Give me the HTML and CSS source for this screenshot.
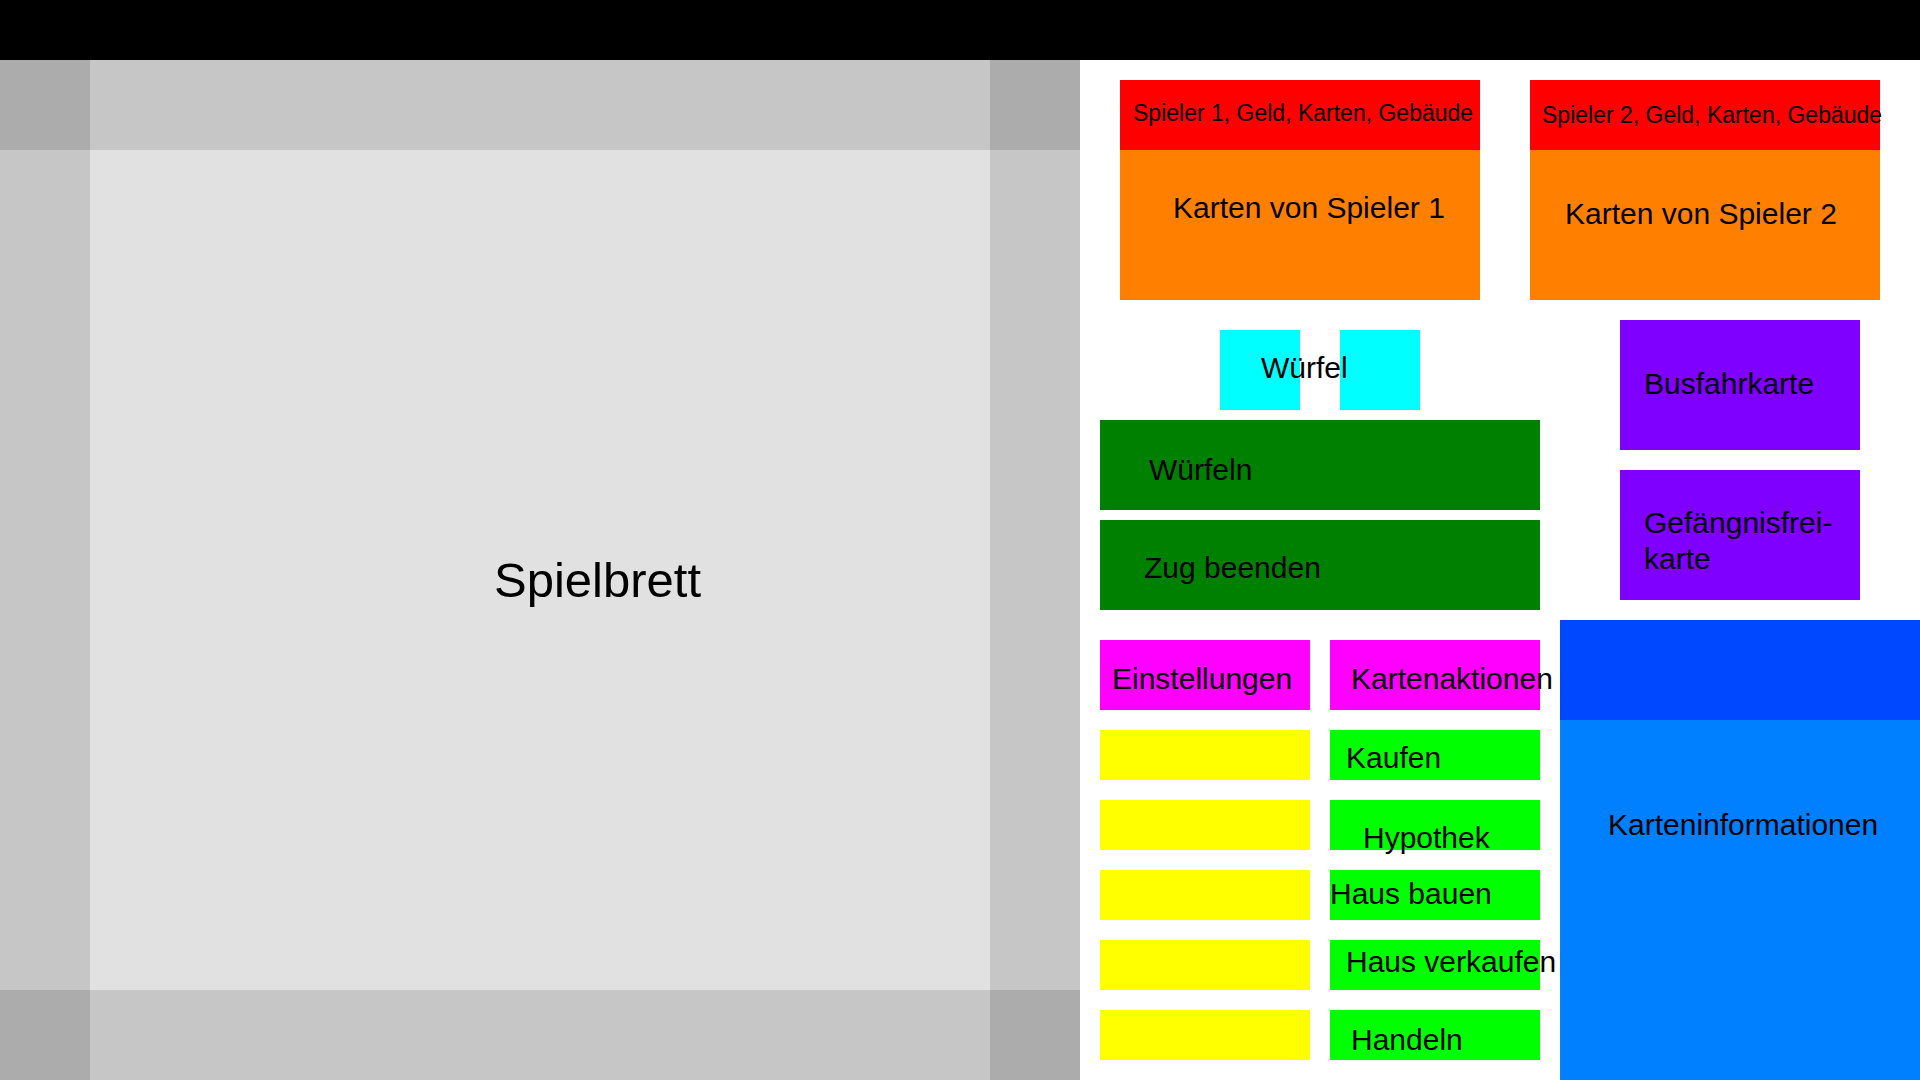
FILE: index.html
```html
<!DOCTYPE html>
<html lang="de">
<head>
<meta charset="utf-8">
<title>Spiel</title>
<link rel="stylesheet" href="styles.css">
</head>
<body>
<div class="topbar"></div>
<div class="main">
  <div class="board">
    <div class="corner"></div><div class="edge"></div><div class="corner"></div>
    <div class="edge"></div>
    <div class="center"><span class="board-title">Spielbrett</span></div>
    <div class="edge"></div>
    <div class="corner"></div><div class="edge"></div><div class="corner"></div>
  </div>
  <div class="side">
    <div class="players">
      <div class="player p1">
        <div class="p-head"><span class="small-lbl">Spieler 1, Geld, Karten, Gebäude</span></div>
        <div class="p-cards"><span class="lbl">Karten von Spieler 1</span></div>
      </div>
      <div class="player p2">
        <div class="p-head"><span class="small-lbl">Spieler 2, Geld, Karten, Gebäude</span></div>
        <div class="p-cards"><span class="lbl">Karten von Spieler 2</span></div>
      </div>
    </div>
    <div class="lower">
      <div class="left-col">
        <div class="dice">
          <div class="die"></div>
          <div class="die"></div>
          <span class="lbl dice-lbl">Würfel</span>
        </div>
        <div class="action roll"><span class="lbl">Würfeln</span></div>
        <div class="action end"><span class="lbl">Zug beenden</span></div>
        <div class="pair">
          <div class="menu settings"><span class="lbl">Einstellungen</span></div>
          <div class="menu cardactions"><span class="lbl">Kartenaktionen</span></div>
        </div>
        <div class="rows">
          <div class="slot"></div><div class="cmd buy"><span class="lbl">Kaufen</span></div>
          <div class="slot"></div><div class="cmd mortgage"><span class="lbl">Hypothek</span></div>
          <div class="slot"></div><div class="cmd build"><span class="lbl">Haus bauen</span></div>
          <div class="slot"></div><div class="cmd sell"><span class="lbl">Haus verkaufen</span></div>
          <div class="slot"></div><div class="cmd trade"><span class="lbl">Handeln</span></div>
        </div>
      </div>
      <div class="right-col">
        <div class="special bus"><span class="lbl">Busfahrkarte</span></div>
        <div class="special jail"><span class="lbl wrap">Gefängnisfrei&shy;karte</span></div>
        <div class="info-head"></div>
        <div class="info"><span class="lbl">Karteninformationen</span></div>
      </div>
    </div>
  </div>
</div>
</body>
</html>
```
FILE: styles.css
```css
* { box-sizing: border-box; }
html, body { margin: 0; padding: 0; }
body {
  width: 1920px;
  height: 1080px;
  overflow: hidden;
  background: #ffffff;
  font-family: "Liberation Sans", Arial, sans-serif;
  color: #000;
}
.topbar { height: 60px; background: #000; }
.main { display: flex; height: 1020px; }

.board {
  width: 1080px;
  height: 1020px;
  display: grid;
  grid-template-columns: 90px 900px 90px;
  grid-template-rows: 90px 840px 90px;
}
.corner { background: #acacac; }
.edge { background: #c6c6c6; }
.center { background: #e1e1e1; padding: 402px 0 0 404px; }
.board-title { display: block; font-size: 49px; line-height: 56px; white-space: nowrap; }

.lbl { display: block; font-size: 30px; line-height: 34px; white-space: nowrap; }
.small-lbl { display: block; font-size: 23px; line-height: 26px; white-space: nowrap; }

.side { width: 840px; padding-top: 20px; }
.players { display: flex; gap: 50px; padding-left: 40px; }
.player { display: flex; flex-direction: column; }
.p1 { width: 360px; }
.p2 { width: 350px; }
.p-head { height: 70px; background: #ff0000; padding: 20px 0 0 13px; }
.p2 .p-head { padding-top: 22px; padding-left: 12px; }
.p-cards { height: 150px; background: #ff8000; }
.p1 .p-cards { padding: 41px 0 0 53px; }
.p2 .p-cards { padding: 47px 0 0 35px; }

.lower { display: grid; grid-template-columns: 440px 360px; column-gap: 20px; padding-left: 20px; }
.left-col { display: flex; flex-direction: column; }
.right-col { display: flex; flex-direction: column; }

.dice { position: relative; display: flex; gap: 40px; height: 80px; margin-top: 30px; padding-left: 120px; }
.die { width: 80px; height: 80px; background: #00ffff; }
.dice-lbl { position: absolute; left: 161px; top: 21px; }

.action { height: 90px; background: #008000; }
.roll { margin-top: 10px; padding: 33px 0 0 49px; }
.end { margin-top: 10px; padding: 31px 0 0 44px; }

.pair { display: flex; gap: 20px; margin-top: 30px; }
.menu { width: 210px; height: 70px; background: #ff00ff; padding-top: 22px; }
.settings { padding-left: 12px; }
.cardactions { padding-left: 21px; }

.rows { display: grid; grid-template-columns: 210px 210px; grid-auto-rows: 50px; column-gap: 20px; row-gap: 20px; margin-top: 20px; }
.slot { background: #ffff00; }
.cmd { background: #00ff00; }
.buy { padding: 11px 0 0 16px; }
.mortgage { padding: 21px 0 0 33px; }
.build { padding: 7px 0 0 0; }
.sell { padding: 5px 0 0 16px; }
.trade { padding: 13px 0 0 21px; }

.special { width: 240px; height: 130px; margin-left: 60px; background: #8000ff; }
.bus { margin-top: 20px; padding: 47px 0 0 24px; }
.jail { margin-top: 20px; padding: 35px 0 0 24px; }
.wrap { white-space: normal; line-height: 36px; hyphens: manual; }

.info-head { height: 100px; margin-top: 20px; background: #0048ff; }
.info { height: 360px; background: #0080ff; padding: 88px 0 0 48px; }
```
